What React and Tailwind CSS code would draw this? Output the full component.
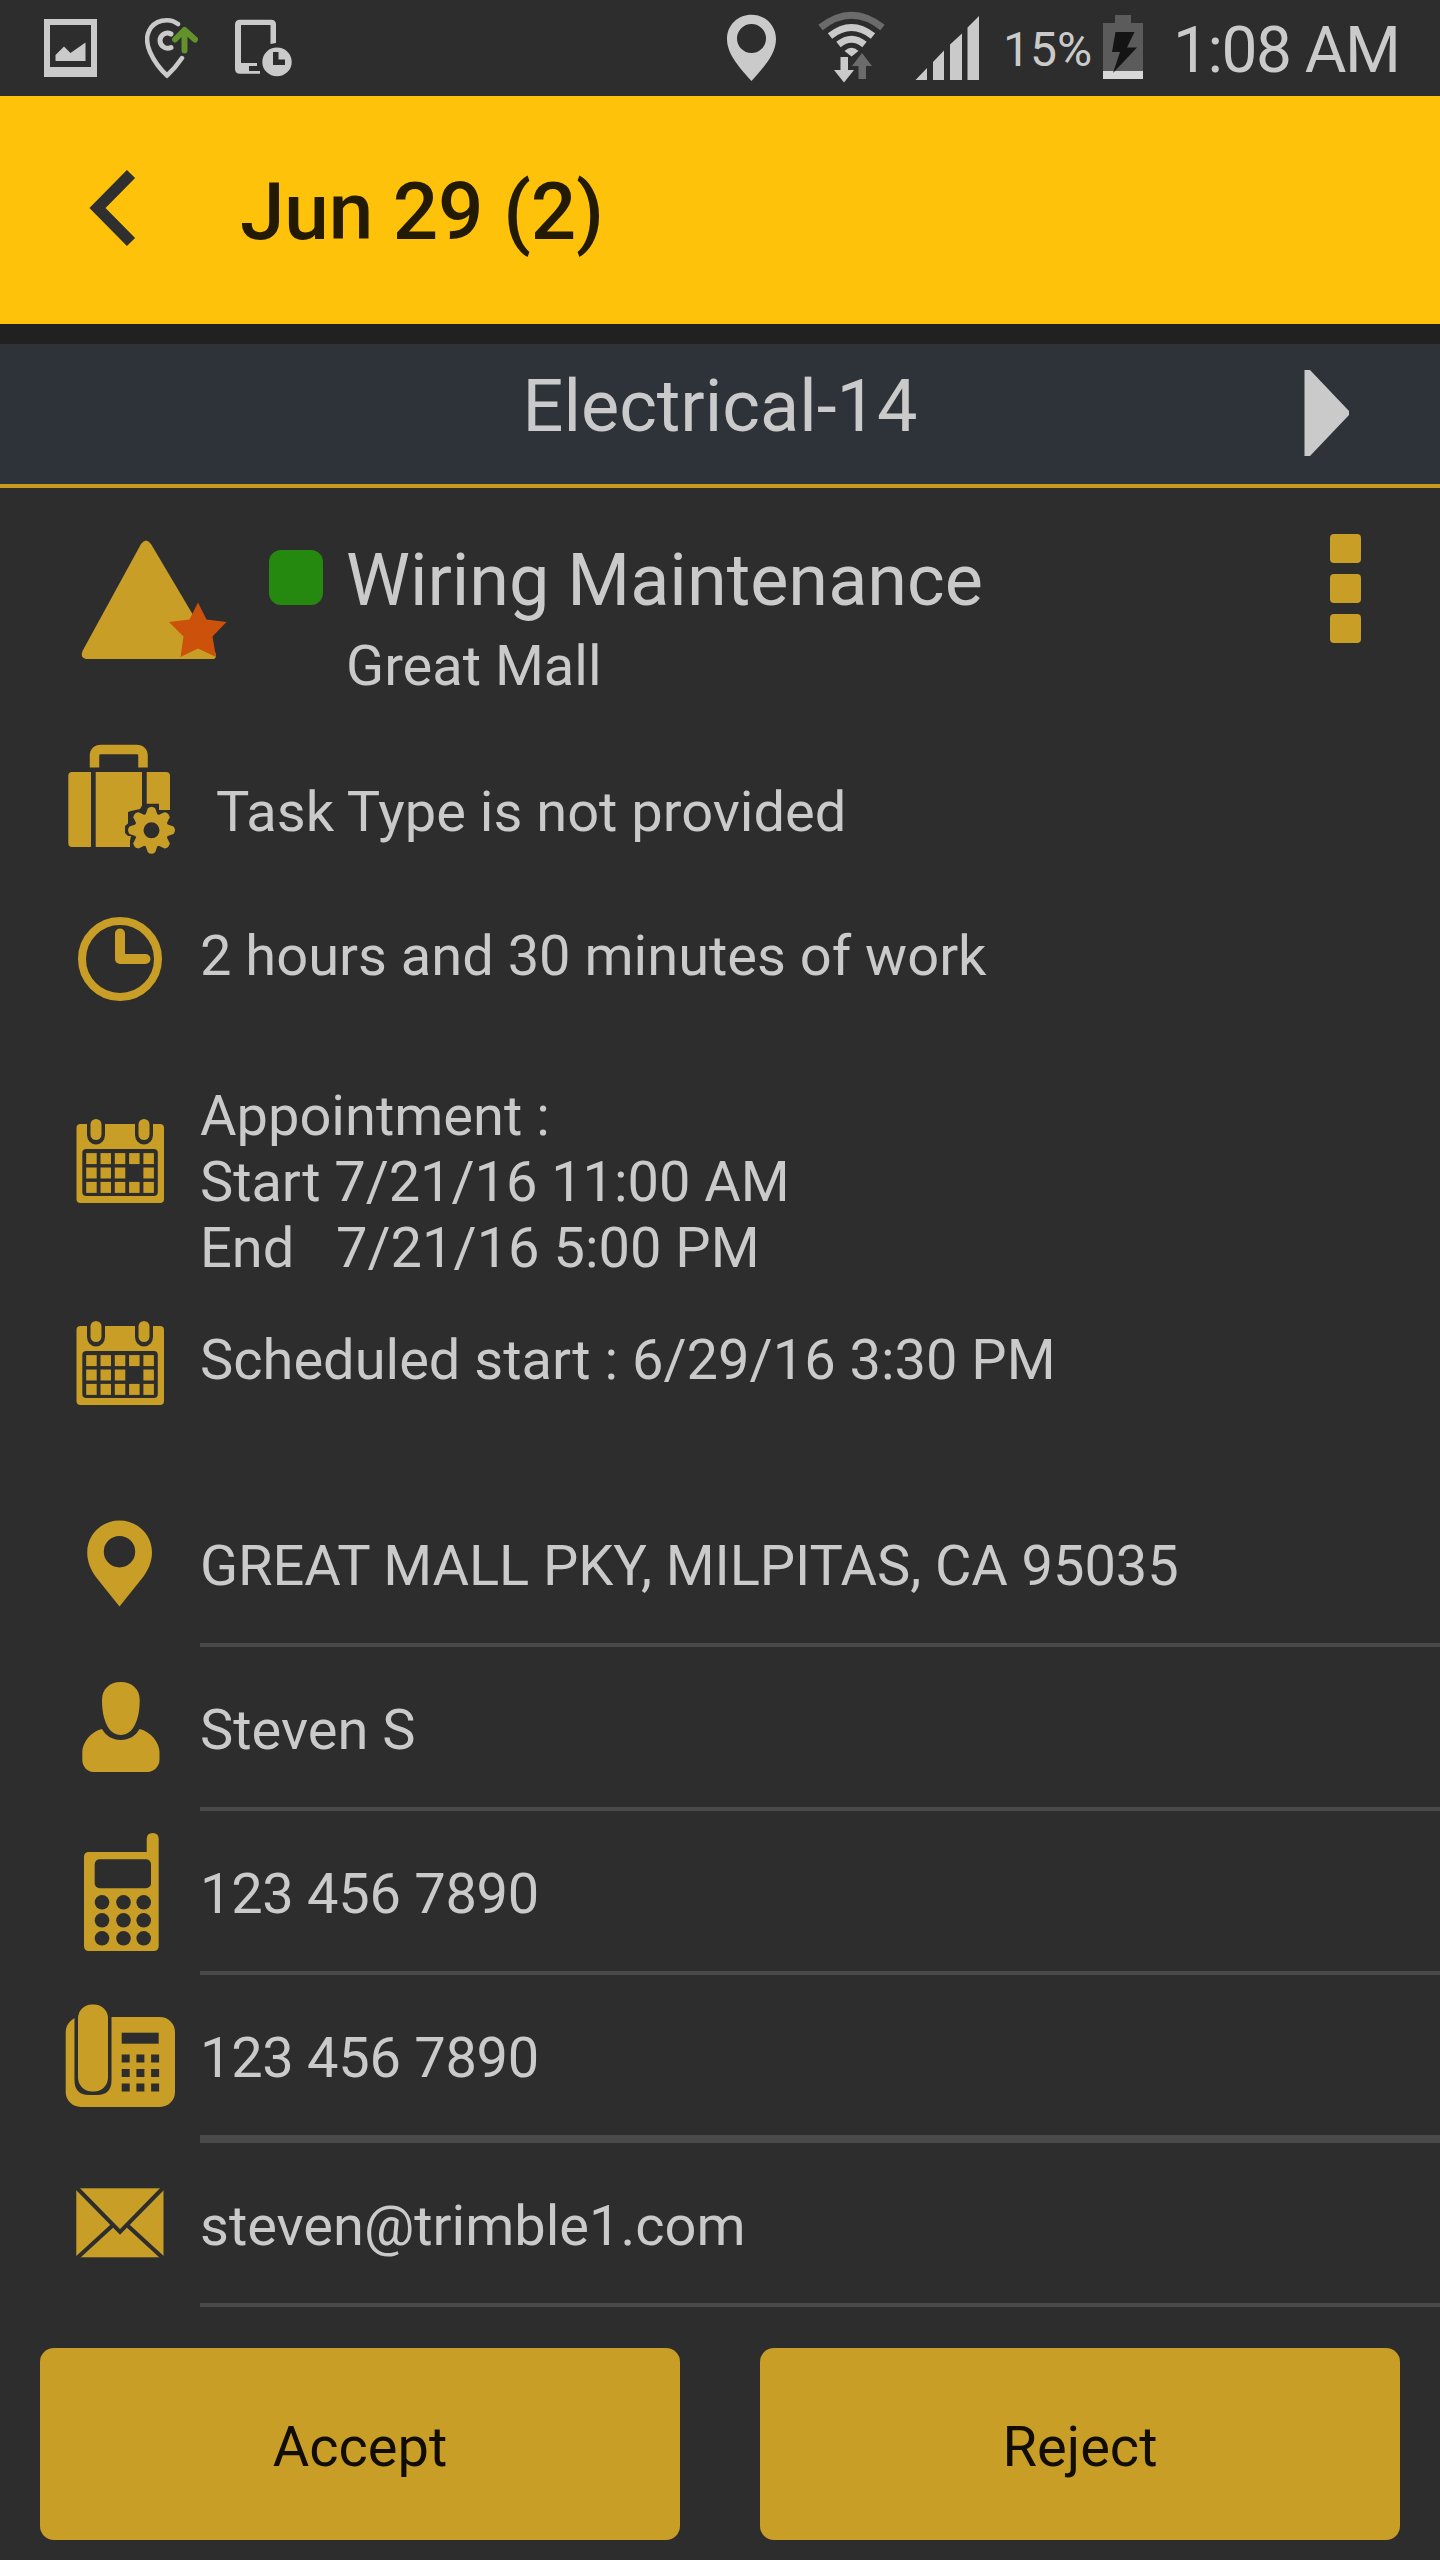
import { useState } from "react";

const KEYPAD = [0, 1, 2];

const CALENDAR_CELLS = [
  [1, 1, 1, 1, 1],
  [1, 1, 1, 0, 1],
  [1, 1, 1, 1, 1],
];

// status bar

const StatusBar = () => {
  return (
    <div className="flex h-24 shrink-0 items-center bg-[#2d2d2d] text-[#cacaca]">
      {/* Screenshot */}
      <svg className="ml-11 h-24 w-[53px] shrink-0" viewBox="0 0 53 96" fill="currentColor">
        <path fillRule="evenodd" d="M0 19H53V77H0ZM6 25V67H47V25Z" />
        <path d="M11.5 61V55L20 46.5L26.5 53L41.5 42.5V61Z" />
      </svg>

      {/* Location sharing */}
      <svg className="ml-12 h-24 w-[53px] shrink-0" viewBox="0 0 53 96" fill="none">
        <path
          d="M33 24C24 17 9 20 4 31C1 37 2 45 5 52C9 61 16 70 22 75.5C28 70 33 64 37 58"
          stroke="#cacaca"
          strokeWidth="4.5"
          strokeLinecap="round"
        />
        <path
          d="M26 34C21 31 15 35 15 40.5C15 46 21 50 26 47.5"
          stroke="#cacaca"
          strokeWidth="5"
          strokeLinecap="round"
        />
        <path
          d="M39.5 50.5V30M30 39.500L39.5 30L50 39.5"
          stroke="#63912c"
          strokeWidth="6"
          strokeLinecap="round"
          strokeLinejoin="round"
        />
      </svg>

      {/* Device timer */}
      <svg className="ml-[37px] h-24 w-[57px] shrink-0" viewBox="0 0 57 96" fill="currentColor">
        <path d="M5 19.7H36Q41 19.7 41 24.7V43L35.5 44V25H6V63H22V66H14V71H25V73.7H5Q0 73.7 0 68.7V24.7Q0 19.7 5 19.7Z" />
        <path
          fillRule="evenodd"
          d="M42 47.5A14.7 14.4 0 1 1 42 76.3A14.7 14.4 0 1 1 42 47.5ZM38 52V65H50V59.5H43.5V52Z"
        />
      </svg>

      {/* GPS */}
      <svg className="ml-[435px] h-24 w-[49px] shrink-0" viewBox="0 0 49 96" fill="currentColor">
        <path
          fillRule="evenodd"
          d="M24.5 14.7C38 14.7 49 25 49 39C49 55 35 69 24.5 81C14 69 0 55 0 39C0 25 11 14.7 24.5 14.7ZM24.5 24A14.5 14.5 0 1 0 24.5 53A14.5 14.5 0 1 0 24.5 24Z"
        />
      </svg>

      {/* Wifi */}
      <svg className="ml-[42px] h-24 w-[67px] shrink-0" viewBox="0 0 67 96" fill="none">
        <path d="M2.5 27.5Q33.5 3 64.5 27.5" stroke="#6b6b6b" strokeWidth="7" />
        <path d="M12 36Q33.5 19 55 36" stroke="#cacaca" strokeWidth="7" />
        <path d="M20.5 44.5Q33.5 34 46.5 44.5" stroke="#cacaca" strokeWidth="7" />
        <path d="M26.5 51Q33.5 44.5 40.5 51L33.5 56.5Z" fill="#cacaca" />
        <path d="M22.5 57H30V70H36L26 82.5L16 70H22.5Z" fill="#cacaca" />
        <path d="M44 53L54 66H48V79H40.5V66H34Z" fill="#6b6b6b" />
      </svg>

      {/* Signal */}
      <svg className="ml-[30px] h-24 w-16 shrink-0" viewBox="0 0 64 96" fill="currentColor">
        <path d="M0.5 80L12 68V80ZM18 80V62L29 50.5V80ZM35 80V44.5L47 33.5V80ZM52.5 80V27.5L64 16V80Z" />
      </svg>

      <span className="ml-6 w-[100px] shrink-0 whitespace-nowrap pt-1 text-[48px] leading-[56px]">
        15%
      </span>

      {/* Battery */}
      <svg className="h-24 w-10 shrink-0" viewBox="0 0 40 96">
        <path d="M12 15H28V23H40V71H0V23H12Z" fill="#5b5b5b" />
        <rect y="71" width="40" height="8" fill="#d8d8d8" />
        <path d="M12.500 32H31.5L24 47.5H34L10 73L17 52H9Z" fill="#141414" />
      </svg>

      <span className="ml-[30px] shrink-0 whitespace-nowrap pt-1.5 text-[64px] leading-[76px] tracking-[-1.5px]">
        1:08 AM
      </span>
    </div>
  );
};

// row icons

const Icon = ({ className = "", children }) => (
  <svg
    className={`h-[120px] w-[120px] shrink-0 overflow-visible text-[#c89e27] ${className}`}
    viewBox="0 0 120 120"
    fill="currentColor"
  >
    {children}
  </svg>
);

const TaskTypeIcon = () => (
  <Icon>
    <path
      d="M34.5 15.5V4Q34.5 -2.5 41 -2.5H76.500Q83 -2.5 83 4V15.5"
      fill="none"
      stroke="currentColor"
      strokeWidth="9.5"
    />
    <path d="M12 20H31V95H12Q8.300 95 8.300 91V24Q8.300 20 12 20ZM35.7 20H82V95H35.7ZM86.7 20H106Q110 20 110 24V95H86.7Z" />
    {/* dark edge between the case and the gear */}
    <path
      d="M70 97V89L71 84H68L65 81V74L68 71.5V60L71 59L80 57L83 51.7H99V58H112V97Z"
      className="fill-[#2d2d2d]"
    />
    <g transform="translate(91.5 78.3)">
      {[0, 45, 90, 135, 180, 225, 270, 315].map((deg) => (
        <path
          key={deg}
          d="M-6.5 -14L-3.700 -22Q0 -25 3.700 -22L6.5 -14Z"
          transform={`rotate(${deg})`}
        />
      ))}
      <circle r="12.5" fill="none" stroke="currentColor" strokeWidth="9" />
    </g>
  </Icon>
);

const ClockIcon = () => (
  <Icon>
    <circle cx="60" cy="63" r="38" fill="none" stroke="currentColor" strokeWidth="8" />
    <path
      d="M60 37.5V63H85.5"
      fill="none"
      stroke="currentColor"
      strokeWidth="10"
      strokeLinecap="round"
      strokeLinejoin="round"
    />
  </Icon>
);

const CalendarIcon = ({ className }) => (
  <Icon className={className}>
    <rect x="16.5" y="26" width="87.5" height="79" rx="4" />
    {[36, 84].map((cx) => (
      <g key={cx}>
        <path
          d={`M${cx - 9} 25V37A9 9.5 0 0 0 ${cx + 9} 37V25Z`}
          className="fill-[#2d2d2d]"
        />
        <rect x={cx - 5.5} y="21" width="11" height="21" rx="5.5" />
      </g>
    ))}
    <rect x="22.3" y="51" width="75.5" height="47" rx="4" className="fill-[#2d2d2d]" />
    {CALENDAR_CELLS.map((row, r) =>
      row.map(
        (on, c) =>
          on === 1 && (
            <rect key={`${r}-${c}`} x={26.2 + c * 14.3} y={55.1 + r * 14.4} width="10.5" height="11" />
          )
      )
    )}
  </Icon>
);

const AddressIcon = () => (
  <Icon>
    <path
      fillRule="evenodd"
      d="M59.5 15.5C77.5 15.5 92 29.5 92 47.5C92 57 88 65 83.5 71.5L59.5 101.5L35.5 71.5C31 65 27.2 57 27.2 47.5C27.2 29.5 41.5 15.5 59.5 15.5ZM59.5 31A15.7 15.7 0 1 0 59.5 62.4A15.7 15.7 0 1 0 59.5 31Z"
    />
  </Icon>
);

const PersonIcon = () => (
  <Icon>
    <path d="M60.7 13C72 13 79.7 20 79.7 31C79.7 51 73 66 60.7 66C48.5 66 42 51 42 31C42 20 49.5 13 60.7 13Z" />
    <path d="M42 60C46 67 52.5 71 60.7 71C69 71 75.5 67 79.5 60C91 62.5 99.5 74 99.5 83V91C99.5 98 93 103 88 103H33C28 103 22.3 98 22.3 91V83C22.3 74 30.5 62.5 42 60Z" />
  </Icon>
);

const MobileIcon = () => (
  <Icon>
    <path d="M29 19H86.7V6Q86.7 0 92.7 0Q98.7 0 98.7 6V113Q98.7 118 93.7 118H29Q24 118 24 113V24Q24 19 29 19Z" />
    <g className="fill-[#2d2d2d]">
      <rect x="34.7" y="26.3" width="56.3" height="29" rx="5" />
      {KEYPAD.map((r) =>
        [42, 63.5, 83.7].map((cx) => (
          <circle key={`${r}-${cx}`} cx={cx} cy={69.3 + r * 18} r="7.3" />
        ))
      )}
    </g>
  </Icon>
);

const DeskPhoneIcon = () => (
  <Icon>
    <rect x="5.7" y="18" width="109.3" height="90" rx="15" />
    <path
      d="M14.5 17H51.5V81Q51.5 96 37 96H29Q14.5 96 14.5 81Z"
      className="fill-[#2d2d2d]"
    />
    <rect x="18" y="5.5" width="30" height="87" rx="14" />
    <g className="fill-[#2d2d2d]">
      <rect x="61.7" y="33.7" width="37" height="11" />
      {KEYPAD.map((r) =>
        KEYPAD.map((c) => (
          <rect key={`${r}-${c}`} x={61.7 + c * 14.7} y={55.5 + r * 14.5} width="8" height="8" />
        ))
      )}
    </g>
  </Icon>
);

const MailIcon = () => (
  <Icon>
    <rect x="16.3" y="23.3" width="87.2" height="69" />
    <path
      d="M16 22L60 67L104 22M53 60L16 94M67 60L104 94"
      fill="none"
      stroke="#2d2d2d"
      strokeWidth="4"
    />
  </Icon>
);

const CONTACT_ROWS = [
  { icon: AddressIcon, text: "GREAT MALL PKY, MILPITAS, CA 95035", tracking: "tracking-[-0.08px]" },
  { icon: PersonIcon, text: "Steven S" },
  { icon: MobileIcon, text: "123 456 7890", tracking: "tracking-[-0.3px]" },
  { icon: DeskPhoneIcon, text: "123 456 7890", tracking: "tracking-[-0.3px]", thick: true },
  { icon: MailIcon, text: "steven@trimble1.com" },
];

const ContactRow = ({ icon: RowIcon, text, tracking = "", thick }) => (
  <div className={`flex items-center pl-[60px] ${thick ? "h-[168px]" : "h-[164px]"}`}>
    <RowIcon />
    <div
      className={`ml-5 flex h-full flex-1 items-center border-[#4a4a4a] pt-1.5 ${tracking} ${
        thick ? "border-b-8" : "border-b-4"
      }`}
    >
      {text}
    </div>
  </div>
);

const App = () => {
  const [answer, setAnswer] = useState(null);

  return (
    <div className="flex h-[2560px] w-[1440px] flex-col overflow-hidden bg-[#2d2d2d] font-['Roboto',sans-serif] text-[56px] leading-[66px] text-[#cacaca]">
      <StatusBar />

      {/* Title bar */}
      <header className="flex h-[228px] shrink-0 items-center bg-[#ffc20a] text-[#221a02]">
        <button type="button" className="ml-[88px]">
          <svg className="h-20 w-12" viewBox="0 0 48 80" fill="none">
            <path d="M43 4L9.5 38L43 72" stroke="#2f2f2f" strokeWidth="11.5" />
          </svg>
        </button>
        <h1 className="ml-[104px] pt-1 text-[80px] font-medium leading-[94px] tracking-[-0.15px]">
          Jun 29 (2)
        </h1>
      </header>

      {/* Task switcher */}
      <div className="relative flex h-[164px] shrink-0 justify-center border-b-4 border-t-[20px] border-b-[#c89a1d] border-t-[#202120] bg-[#2e3239] pt-5 text-[72px] leading-[85px]">
        Electrical-14
        <button type="button" className="absolute right-[90px] top-[26px]">
          <svg className="h-[86px] w-[46px]" viewBox="0 0 46 86" fill="currentColor">
            <path d="M0.5 0H6L45 41V45L6 86H0.5Z" />
          </svg>
        </button>
      </div>

      {/* Task heading */}
      <div className="flex h-[252px] shrink-0 items-start">
        <svg className="ml-20 mt-[50px] h-[124px] w-[148px]" viewBox="0 0 148 124">
          <path d="M61 6Q66 -1 71 6L135 114Q138 121 132 121H6Q0 120 2.5 113Z" fill="#c89e27" />
          <path
            d="M118 64.5L126.5 81.5L146.5 84L132.5 98.5L136 119L118 110.5L100.5 119L103.5 98.5L89 84L109.5 81.5Z"
            fill="#cc510b"
          />
        </svg>
        <span className="ml-[41px] mt-[62px] h-[55px] w-[54px] rounded-xl bg-[#26890f]" />
        <div className="ml-[23px] mt-[50px] flex-1">
          <h2 className="text-[72px] leading-[85px]">Wiring Maintenance</h2>
          <p className="mt-[10px]">Great Mall</p>
        </div>
        <button type="button" className="mr-[79px] mt-[46px] flex flex-col gap-[11px]">
          <span className="h-[29px] w-[31px] rounded-sm bg-[#c89e27]" />
          <span className="h-[29px] w-[31px] rounded-sm bg-[#c89e27]" />
          <span className="h-[29px] w-[31px] rounded-sm bg-[#c89e27]" />
        </button>
      </div>

      {/* Schedule */}
      <div className="flex h-36 shrink-0 items-center pl-[60px]">
        <TaskTypeIcon />
        <span className="ml-9">Task Type is not provided</span>
      </div>
      <div className="flex h-36 shrink-0 items-center pl-[60px]">
        <ClockIcon />
        <span className="ml-5">2 hours and 30 minutes of work</span>
      </div>
      <div className="flex h-[253px] shrink-0 items-start pl-[60px]">
        <CalendarIcon className="mt-[70px]" />
        <div className="ml-5 whitespace-pre pt-[55px]">
          <p>Appointment :</p>
          <p className="tracking-[-0.06px]">Start 7/21/16 11:00 AM</p>
          <p>{"End   7/21/16 5:00 PM"}</p>
        </div>
      </div>
      <div className="flex h-[158px] shrink-0 items-center pl-[60px]">
        <CalendarIcon />
        <span className="ml-5">Scheduled start : 6/29/16 3:30 PM</span>
      </div>

      {/* Contact */}
      <div className="mt-11 shrink-0">
        {CONTACT_ROWS.map((row, i) => (
          <ContactRow key={i} {...row} />
        ))}
      </div>

      {/* Actions */}
      <div className="mt-[41px] grid shrink-0 grid-cols-2 gap-20 px-10 text-[#110d02]">
        <button
          type="button"
          onClick={() => setAnswer("accept")}
          disabled={answer === "accept"}
          className="h-48 rounded-[14px] bg-[#c89e27] pt-1.5"
        >
          Accept
        </button>
        <button
          type="button"
          onClick={() => setAnswer("reject")}
          disabled={answer === "reject"}
          className="h-48 rounded-[14px] bg-[#c89e27] pt-1.5"
        >
          Reject
        </button>
      </div>
    </div>
  );
};
export default App;
